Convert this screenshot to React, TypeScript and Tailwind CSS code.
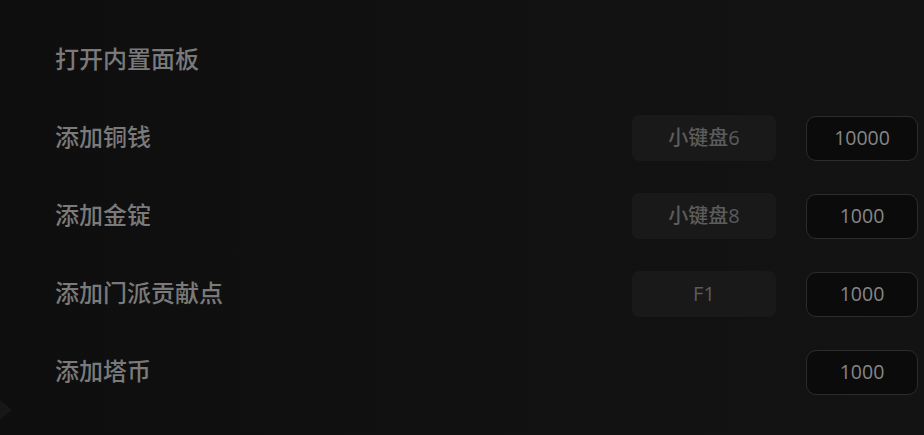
import React from "react";

const rows: { label: string; key?: string; value?: string }[] = [
  { label: "打开内置面板" },
  { label: "添加铜钱", key: "小键盘6", value: "10000" },
  { label: "添加金锭", key: "小键盘8", value: "1000" },
  { label: "添加门派贡献点", key: "F1", value: "1000" },
  { label: "添加塔币", value: "1000" },
];

const font = { fontFamily: '"Noto Sans CJK SC", "Noto Sans", sans-serif' };
const numFont = { fontFamily: '"Open Sans", "Noto Sans CJK SC", sans-serif' };

export default function App() {
  return (
    <div
      className="relative w-[924px] h-[435px] overflow-hidden bg-gradient-to-r from-[#0e0e0f] via-[#121112] to-[#131313]"
      style={font}
    >
      <div className="flex flex-col gap-[32px] pt-[37px] pl-[55px] pr-[6px]">
        {rows.map((r) => (
          <div key={r.label} className="flex items-center h-[46px]">
            <div className="flex-1 text-[24px] leading-none font-medium text-[#7a7a7a] -mt-[4px]">
              {r.label}
            </div>
            {r.key ? (
              <div
                className="w-[144px] h-[46px] rounded-[7px] bg-[#191919] flex items-center justify-center text-[20px] font-medium text-[#5c5c5c]"
                style={numFont}
              >
                {r.key}
              </div>
            ) : null}
            {r.value ? (
              <div
                className="ml-[30px] w-[112px] h-[45px] rounded-[10px] border border-[#2c2c2c] bg-[#0b0b0b] flex items-center justify-center text-[19.5px] font-medium text-[#868686]"
                style={numFont}
              >
                {r.value}
              </div>
            ) : null}
          </div>
        ))}
      </div>
      <div className="absolute left-0 top-[400px] w-0 h-0 border-t-[10px] border-b-[10px] border-l-[12px] border-t-transparent border-b-transparent border-l-[#171717]" />
    </div>
  );
}
